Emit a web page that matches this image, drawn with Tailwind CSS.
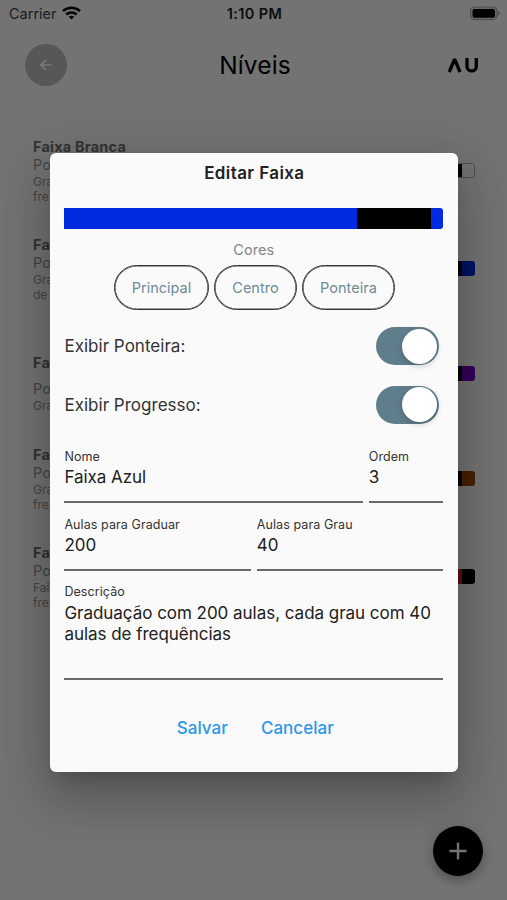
<!DOCTYPE html>
<html lang="pt-BR">
<head>
<meta charset="utf-8">
<title>Níveis</title>
<script src="https://cdn.jsdelivr.net/npm/@tailwindcss/browser@4"></script>
</head>
<body class="relative h-[900px] w-[507px] overflow-hidden bg-[#737373] font-['Inter','Liberation_Sans',sans-serif] text-black">

<!-- Status bar -->
<div class="grid h-7 grid-cols-3 items-center pl-[9px] pr-[7px]">
  <div class="flex items-center gap-[5px]">
    <span class="text-[14.5px] leading-7 tracking-[0px] text-[#1c1c1c]">Carrier</span>
    <svg class="-mt-0.5 h-[14px] w-[19px]" viewBox="0 0 19 14" fill="none" stroke="#050505" stroke-width="2.5">
      <path d="M1 5.2C5.8.7 13.2.7 18 5.2M4.2 8.5c3-2.8 7.6-2.8 10.6 0"/>
      <path d="M9.5 13.6 6.7 10.8c1.6-1.4 4-1.4 5.6 0z" fill="#050505" stroke="none"/>
    </svg>
  </div>
  <span class="text-center text-[14.5px] font-semibold tracking-[0.4px] text-[#0c0c0c]">1:10 PM</span>
  <svg class="-mt-0.5 h-4 w-8 justify-self-end" viewBox="0 0 32 16">
    <rect x="2.5" y="2" width="26.5" height="12.6" rx="4" fill="#686868" stroke="#505050" stroke-width="1.2"/>
    <rect x="4.5" y="4" width="22.5" height="8.8" rx="2" fill="#000"/>
    <path d="M30 6c2.2.8 2.2 3.8 0 4.6z" fill="#505050"/>
  </svg>
</div>

<!-- App bar -->
<header class="grid h-[73px] grid-cols-3 items-center pl-[25px] pr-[28px]">
  <div class="flex h-[42px] w-[42px] items-center justify-center rounded-full bg-[#575757]">
    <svg class="h-3 w-3" viewBox="0 0 12 12" fill="none" stroke="#7b7b7b" stroke-width="1.5"><path d="M11.5 6H1M6 .8.9 6 6 11.2"/></svg>
  </div>
  <h1 class="pl-[6px] text-center text-[24.5px] leading-8 tracking-[0.1px]">Níveis</h1>
  <svg class="h-4 w-8 justify-self-end" viewBox="0 0 32 16" fill="none" stroke="#000" stroke-width="3.3" stroke-linejoin="bevel">
    <path d="M2.2 15 7.6 2.2 13 15M20 1v8.4c0 6 9.3 6 9.3 0V1"/>
  </svg>
</header>

<!-- Levels list -->
<main class="flex flex-col pl-[33px] pr-[32px] pt-[37px] text-[#454545]">
  <section class="flex h-[98px] justify-between">
    <div><h2 class="text-[14.5px] font-bold leading-[18px] tracking-[0.2px] text-[#333]">Faixa Branca</h2><p class="text-[14.5px] leading-[17.5px]">Po</p><p class="text-[12px] leading-[15px]">Gra<br>fre</p></div>
    <div class="mt-[25px] flex h-[15px] w-20 overflow-hidden rounded-[3px] border border-[#505050]"><i class="flex-1 bg-black"></i><i class="w-3 bg-[#737373]"></i></div>
  </section>
  <section class="flex h-[118px] justify-between">
    <div><h2 class="text-[14.5px] font-bold leading-[18px] tracking-[0.2px] text-[#333]">Fa</h2><p class="text-[14.5px] leading-[17.5px]">Po</p><p class="text-[12px] leading-[15px]">Gra<br>de</p></div>
    <div class="mt-[25px] flex h-[15px] w-20 overflow-hidden rounded-[3px]"><i class="flex-1 bg-black"></i><i class="w-[13px] bg-[#001264]"></i></div>
  </section>
  <section class="flex h-[92px] justify-between">
    <div><h2 class="text-[14.5px] font-bold leading-[18px] tracking-[0.2px] text-[#333]">Fa</h2><p class="mt-2 text-[14.5px] leading-[17.5px]">Po</p><p class="text-[12px] leading-[15px]">Gra</p></div>
    <div class="mt-3 flex h-[15px] w-20 overflow-hidden rounded-[3px]"><i class="flex-1 bg-black"></i><i class="w-[13px] bg-[#34005a]"></i></div>
  </section>
  <section class="flex h-[98px] justify-between">
    <div><h2 class="text-[14.5px] font-bold leading-[18px] tracking-[0.2px] text-[#333]">Fa</h2><p class="text-[14.5px] leading-[17.5px]">Po</p><p class="text-[12px] leading-[15px]">Gra<br>fre</p></div>
    <div class="mt-[25px] flex h-[15px] w-20 overflow-hidden rounded-[3px]"><i class="flex-1 bg-black"></i><i class="w-[13px] bg-[#481f00]"></i></div>
  </section>
  <section class="flex h-[98px] justify-between">
    <div><h2 class="text-[14.5px] font-bold leading-[18px] tracking-[0.2px] text-[#333]">Fa</h2><p class="text-[14.5px] leading-[17.5px]">Po</p><p class="text-[12px] leading-[15px]">Fai<br>fre</p></div>
    <div class="mt-[25px] flex h-[15px] w-20 overflow-hidden rounded-[3px]"><i class="flex-1 bg-[#5c1014]"></i><i class="w-[13px] bg-black"></i></div>
  </section>
</main>

<!-- Floating action button -->
<button class="absolute left-[433px] top-[826px] flex h-[50px] w-[50px] items-center justify-center rounded-full bg-black shadow-[0_5px_8px_rgba(0,0,0,0.2),0_2px_18px_rgba(0,0,0,0.12)]">
  <svg class="h-[18px] w-[18px]" viewBox="0 0 18 18" fill="none" stroke="#737373" stroke-width="2.4"><path d="M9 .4v17.2M.4 9h17.2"/></svg>
</button>

<!-- Edit dialog -->
<div role="dialog" class="absolute left-[50px] top-[153px] flex h-[619px] w-[408px] flex-col rounded-[6px] bg-[#fafafa] pl-[14.4px] pr-[14.8px] text-[#212121] shadow-[0_13px_18px_-9px_rgba(0,0,0,0.2),0_29px_46px_4px_rgba(0,0,0,0.14),0_11px_56px_10px_rgba(0,0,0,0.12)]">
  <h2 class="mt-[9px] pl-px text-center text-[17px] font-semibold leading-[22px] tracking-[0.4px]">Editar Faixa</h2>
  <div class="mt-6 flex h-[21px] overflow-hidden rounded-r-[3px] bg-[#002be0]"><i class="w-[293px]"></i><i class="w-[74px] bg-black"></i></div>
  <p class="mt-[11px] text-center text-[14.5px] leading-5 tracking-[0.05px] text-[#858585]">Cores</p>
  <div class="mt-[5px] flex h-[45px] justify-center gap-[5px] pl-[1.4px] text-[14.5px] tracking-[0.02px] text-[#6f8a98]">
    <button class="w-[95px] rounded-full border border-[#333] shadow-[inset_0_0_0_0.6px_#444]">Principal</button>
    <button class="w-[83px] rounded-full border border-[#333] shadow-[inset_0_0_0_0.6px_#444]">Centro</button>
    <button class="w-[93px] rounded-full border border-[#333] shadow-[inset_0_0_0_0.6px_#444]">Ponteira</button>
  </div>
  <div class="mt-[7px] flex h-[58px] items-center justify-between pr-[4.5px] text-[17px] tracking-[0.02px] text-[#333]">
    <span class="pt-0.5">Exibir Ponteira:</span>
    <span class="flex h-[38px] w-[63px] items-center justify-end rounded-full bg-[#607d8b] pr-[1.5px]"><i class="h-[35px] w-[35px] rounded-full bg-white shadow-[0_2px_6px_rgba(0,0,0,0.2)]"></i></span>
  </div>
  <div class="flex h-[59px] items-center justify-between pr-[4.5px] text-[17px] tracking-[0.02px] text-[#333]">
    <span class="pt-0.5">Exibir Progresso:</span>
    <span class="flex h-[38px] w-[63px] items-center justify-end rounded-full bg-[#607d8b] pr-[1.5px]"><i class="h-[35px] w-[35px] rounded-full bg-white shadow-[0_2px_6px_rgba(0,0,0,0.2)]"></i></span>
  </div>
  <div class="mt-[15px] flex gap-[6px]">
    <label class="flex h-[54px] w-[298.4px] flex-col border-b-2 border-[#696969]"><span class="text-[12.5px] leading-4 tracking-[0.08px] text-[#333]">Nome</span><span class="mt-0.5 text-[17px] leading-[21px] tracking-[-0.05px]">Faixa Azul</span></label>
    <label class="flex h-[54px] flex-1 flex-col border-b-2 border-[#696969]"><span class="text-[12.5px] leading-4 tracking-[0.08px] text-[#333]">Ordem</span><span class="mt-0.5 text-[17px] leading-[21px] tracking-[-0.02px]">3</span></label>
  </div>
  <div class="mt-[14px] flex gap-[6px]">
    <label class="flex h-[54px] flex-1 flex-col border-b-2 border-[#696969]"><span class="text-[12.5px] leading-4 tracking-[0.08px] text-[#333]">Aulas para Graduar</span><span class="mt-0.5 text-[17px] leading-[21px] tracking-[-0.02px]">200</span></label>
    <label class="flex h-[54px] flex-1 flex-col border-b-2 border-[#696969]"><span class="text-[12.5px] leading-4 tracking-[0.08px] text-[#333]">Aulas para Grau</span><span class="mt-0.5 text-[17px] leading-[21px] tracking-[-0.02px]">40</span></label>
  </div>
  <label class="mt-[13px] flex h-[96px] flex-col border-b-2 border-[#696969]"><span class="text-[12.5px] leading-4 tracking-[0.08px] text-[#333]">Descrição</span><span class="mt-[3px] whitespace-nowrap text-[17px] leading-[21px] tracking-[-0.03px]">Graduação com 200 aulas, cada grau com 40<br>aulas de frequências</span></label>
  <div class="mt-[36px] flex justify-center gap-[33px] pl-[3px] text-[17px] font-medium leading-6 tracking-[0.05px] text-[#2d97ec]">
    <button>Salvar</button><button>Cancelar</button>
  </div>
</div>
</body>
</html>
